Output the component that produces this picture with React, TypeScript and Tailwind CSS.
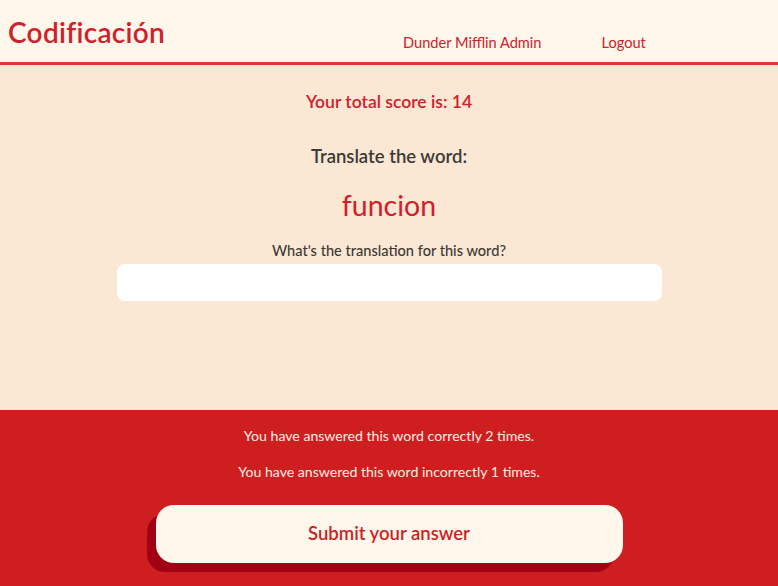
const App = () => {
  return (
    <div className="flex h-[586px] w-[778px] flex-col bg-[#fae7d4] font-['Lato',sans-serif]">
      <header className="flex h-[65px] items-center border-b-[3px] border-[#dc3a30] bg-[#fff7eb]">
        <h1 className="ml-2 mt-[2px] text-[28px] font-semibold leading-none tracking-[0.3px] text-[#d0202a]">
          Codificación
        </h1>
        <nav className="ml-[238px] mt-[24px] flex gap-[60px] text-[14.6px] text-[#d0202a]">
          <a href="#">Dunder Mifflin Admin</a>
          <a href="#">Logout</a>
        </nav>
      </header>

      <main className="flex h-[345px] flex-col items-center">
        <p className="mt-[24px] text-[17.5px] font-semibold text-[#d0202a]">
          Your total score is: 14
        </p>
        <h2 className="mt-[28px] text-[18.5px] font-semibold text-[#3e3a36]">
          Translate the word:
        </h2>
        <p className="mt-[16px] text-[28.5px] leading-9 text-[#d0202a]">
          funcion
        </p>
        <label className="mt-[17px] text-[14.6px] font-medium text-[#3e3a36]">
          What's the translation for this word?
        </label>
        <input
          type="text"
          className="mt-[2px] h-[37px] w-[545px] rounded-lg bg-white px-3 outline-none"
        />
      </main>

      <footer className="flex flex-1 flex-col items-center bg-[#cf1e1f] text-[14.1px] text-[#fdeee4]">
        <p className="mt-[15px]">You have answered this word correctly 2 times.</p>
        <p className="mt-[15px]">You have answered this word incorrectly 1 times.</p>
        <button className="mt-[23px] h-[58px] w-[467px] rounded-[18px] bg-[#fff7ec] text-[18.5px] font-semibold text-[#cf1e1f] shadow-[-9px_9px_0_#a10015]">
          Submit your answer
        </button>
      </footer>
    </div>
  );
};

export default App;
